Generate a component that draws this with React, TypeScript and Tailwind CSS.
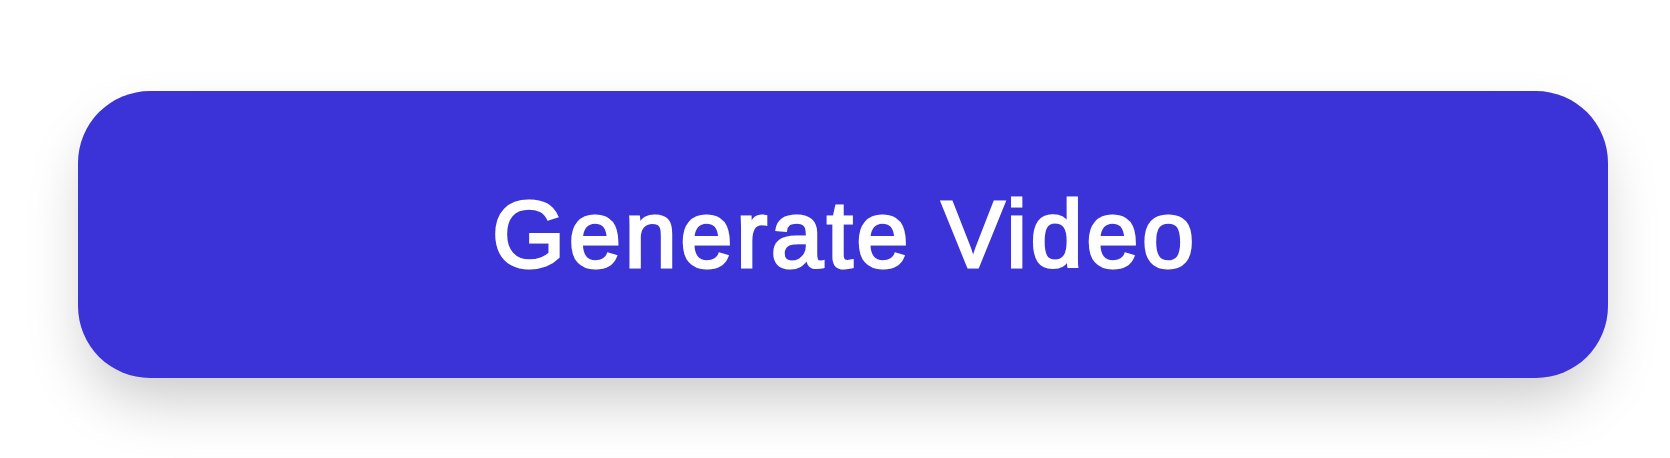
export default function App() {
  return (
    <div className="min-h-[458px] w-[1670px] bg-white pt-[91px] pl-[78px]">
      <button
        type="button"
        className="flex h-[287px] w-[1530px] items-center justify-center rounded-[72px] bg-[#3b33d7] pl-[4px] text-[94px] font-normal leading-none tracking-[3.5px] text-white shadow-[0_30px_60px_-10px_rgba(0,0,0,0.22)] [-webkit-text-stroke:3px_white]"
        style={{ fontFamily: '"Liberation Sans", Arial, sans-serif' }}
      >
        Generate Video
      </button>
    </div>
  );
}
